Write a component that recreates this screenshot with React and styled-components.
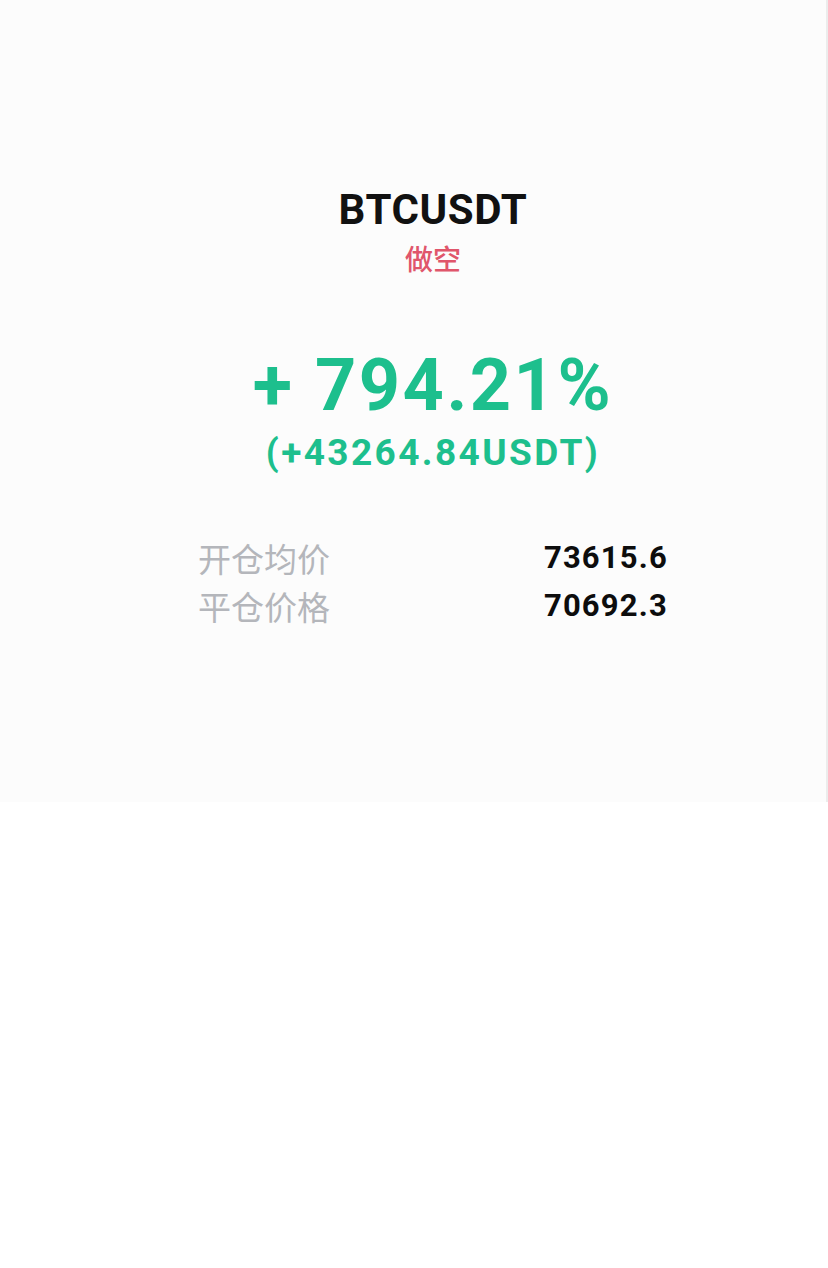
import React from "react";
import styled, { createGlobalStyle } from "styled-components";

const GlobalStyle = createGlobalStyle`
  html, body {
    margin: 0;
    padding: 0;
    background: #ffffff;
  }
`;

const Page = styled.div`
  width: 828px;
  min-height: 1268px;
  background: #ffffff;
`;

const Card = styled.div`
  box-sizing: border-box;
  height: 802px;
  padding: 186px 0 0 40px;
  background: #fcfcfc;
  border-right: 2px solid #ececec;
  display: flex;
  flex-direction: column;
  align-items: center;
`;

const Symbol = styled.div`
  font-family: Roboto, "Liberation Sans", sans-serif;
  font-weight: 700;
  font-size: 42px;
  line-height: 48px;
  letter-spacing: 0.6px;
  color: #111111;
`;

const Side = styled.div`
  margin-top: 6px;
  font-family: "Noto Sans CJK SC", sans-serif;
  font-weight: 500;
  font-size: 28px;
  line-height: 36px;
  color: #e0566b;
`;

const Percent = styled.div`
  margin-top: 70px;
  font-family: Roboto, "Liberation Sans", sans-serif;
  font-weight: 700;
  font-size: 72px;
  line-height: 80px;
  letter-spacing: 2.5px;
  color: #1dbf8d;
  white-space: pre;
`;

const Amount = styled.div`
  margin-top: 5px;
  font-family: Roboto, "Liberation Sans", sans-serif;
  font-weight: 700;
  font-size: 37px;
  line-height: 44px;
  letter-spacing: 2.4px;
  color: #1dbf8d;
`;

const Stats = styled.div`
  margin-top: 59px;
  width: 470px;
  display: flex;
  flex-direction: column;
`;

const Row = styled.div`
  height: 48px;
  display: flex;
  align-items: center;
  justify-content: space-between;
`;

const Label = styled.span`
  font-family: "Noto Sans CJK SC", sans-serif;
  font-weight: 400;
  font-size: 33px;
  line-height: 48px;
  color: #b4b6bb;
`;

const Value = styled.span`
  font-family: Roboto, "Liberation Sans", sans-serif;
  font-weight: 700;
  font-size: 31px;
  line-height: 48px;
  letter-spacing: 1.2px;
  color: #0d0d0d;
`;

const stats = [
  { label: "开仓均价", value: "73615.6" },
  { label: "平仓价格", value: "70692.3" },
];

const App = () => {
  return (
    <>
      <GlobalStyle />
      <Page>
        <Card>
          <Symbol>BTCUSDT</Symbol>
          <Side>做空</Side>
          <Percent>+ 794.21%</Percent>
          <Amount>(+43264.84USDT)</Amount>
          <Stats>
            {stats.map((s, i) => (
              <Row key={i}>
                <Label>{s.label}</Label>
                <Value>{s.value}</Value>
              </Row>
            ))}
          </Stats>
        </Card>
      </Page>
    </>
  );
};

export default App;
